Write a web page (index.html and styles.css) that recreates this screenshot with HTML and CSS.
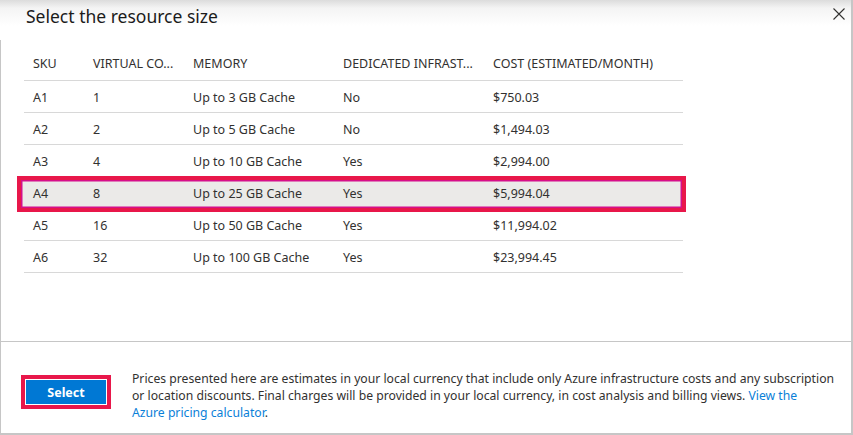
FILE: index.html
```html
<!DOCTYPE html>
<html lang="en">
<head>
<meta charset="utf-8">
<title>Select the resource size</title>
<link rel="stylesheet" href="styles.css">
</head>
<body>
<div class="panel">
  <header class="head">
    <h1 class="title">Select the resource size</h1>
    <button class="close" aria-label="Close">
      <svg width="12" height="12" viewBox="0 0 12 12"><path d="M0.5 0.5 L11.5 11.5 M11.5 0.5 L0.5 11.5" stroke="#323130" stroke-width="1.1" fill="none"/></svg>
    </button>
  </header>
  <main class="body">
    <div class="grid" role="table">
      <div class="row hdr" role="row"><span>SKU</span><span>VIRTUAL CO...</span><span>MEMORY</span><span>DEDICATED INFRAST...</span><span>COST (ESTIMATED/MONTH)</span></div>
      <div class="row" role="row"><span>A1</span><span>1</span><span>Up to 3 GB Cache</span><span>No</span><span>$750.03</span></div>
      <div class="row" role="row"><span>A2</span><span>2</span><span>Up to 5 GB Cache</span><span>No</span><span>$1,494.03</span></div>
      <div class="row" role="row"><span>A3</span><span>4</span><span>Up to 10 GB Cache</span><span>Yes</span><span>$2,994.00</span></div>
      <div class="row sel" role="row"><span>A4</span><span>8</span><span>Up to 25 GB Cache</span><span>Yes</span><span>$5,994.04</span></div>
      <div class="row" role="row"><span>A5</span><span>16</span><span>Up to 50 GB Cache</span><span>Yes</span><span>$11,994.02</span></div>
      <div class="row" role="row"><span>A6</span><span>32</span><span>Up to 100 GB Cache</span><span>Yes</span><span>$23,994.45</span></div>
    </div>
  </main>
  <footer class="foot">
    <div class="btnwrap"><button class="btn">Select</button></div>
    <p class="note">Prices presented here are estimates in your local currency that include only Azure infrastructure costs and any subscription or location discounts. Final charges will be provided in your local currency, in cost analysis and billing views. <a href="#">View the<br>Azure pricing calculator</a>.</p>
  </footer>
</div>
</body>
</html>
```
FILE: styles.css
```css
* { box-sizing: border-box; }
html, body { margin: 0; padding: 0; background: #fff; }
body {
  font-family: "Noto Sans", "Open Sans", sans-serif;
  color: #323130;
  font-size: 12.5px;
}
.panel {
  width: 853px;
  height: 435px;
  display: flex;
  flex-direction: column;
  border-left: 1px solid #c6c6c6;
  border-right: 2px solid #c6c6c6;
  border-bottom: 2px solid #c6c6c6;
  background: #fff;
}
.head {
  height: 40px;
  flex: none;
  display: flex;
  justify-content: space-between;
  align-items: flex-start;
  background: linear-gradient(#dcdcdc 0px, #f4f4f4 8px, #fff 26px);
  margin-left: -1px;
  padding-left: 26px;
}
.title {
  margin: 4px 0 0;
  font-size: 17.5px;
  font-weight: 400;
  color: #1b1b1b;
  line-height: 24px;
}
.close {
  border: 0;
  background: transparent;
  padding: 0;
  margin: 8px 6px 0 0;
  width: 12px;
  height: 12px;
  display: flex;
}
.body {
  flex: 1;
  padding: 9px 0 0 23px;
}
.grid {
  width: 659px;
  display: flex;
  flex-direction: column;
}
.row {
  display: grid;
  grid-template-columns: 60px 100px 150px 150px 1fr;
  height: 32px;
  align-items: center;
  border-bottom: 1px solid #d8d8d8;
  white-space: nowrap;
  position: relative;
}
.row span { padding-left: 9px; padding-top: 1px; }
.row.hdr span { padding-top: 0; padding-bottom: 3px; }
.row.sel { background: #ebeae8; }
.row.sel::after {
  content: "";
  position: absolute;
  left: -7px;
  right: -3px;
  top: -1px;
  bottom: -4px;
  border: 4px solid #e8174a;
  box-shadow: inset 0 0 0 1.5px #d60f8a, inset 0 0 0 3px #ebeae8;
  pointer-events: none;
}
.foot {
  height: 92px;
  flex: none;
  border-top: 1px solid #c6c6c6;
  margin-left: -1px;
  display: flex;
  align-items: flex-start;
  padding: 28px 16px 0 21px;
  gap: 21px;
}
.btnwrap {
  margin-top: 5px;
  border: 4px solid #e8174a;
  padding: 1px;
  flex: none;
}
.btn {
  display: block;
  width: 80px;
  height: 24px;
  border: 0;
  background: #0078d4;
  color: #fff;
  font-family: inherit;
  font-weight: 700;
  font-size: 12.5px;
  padding: 0;
}
.note {
  margin: 0;
  line-height: 17px;
  font-size: 12.2px;
}
.note a { color: #0a80d8; text-decoration: none; }
```
